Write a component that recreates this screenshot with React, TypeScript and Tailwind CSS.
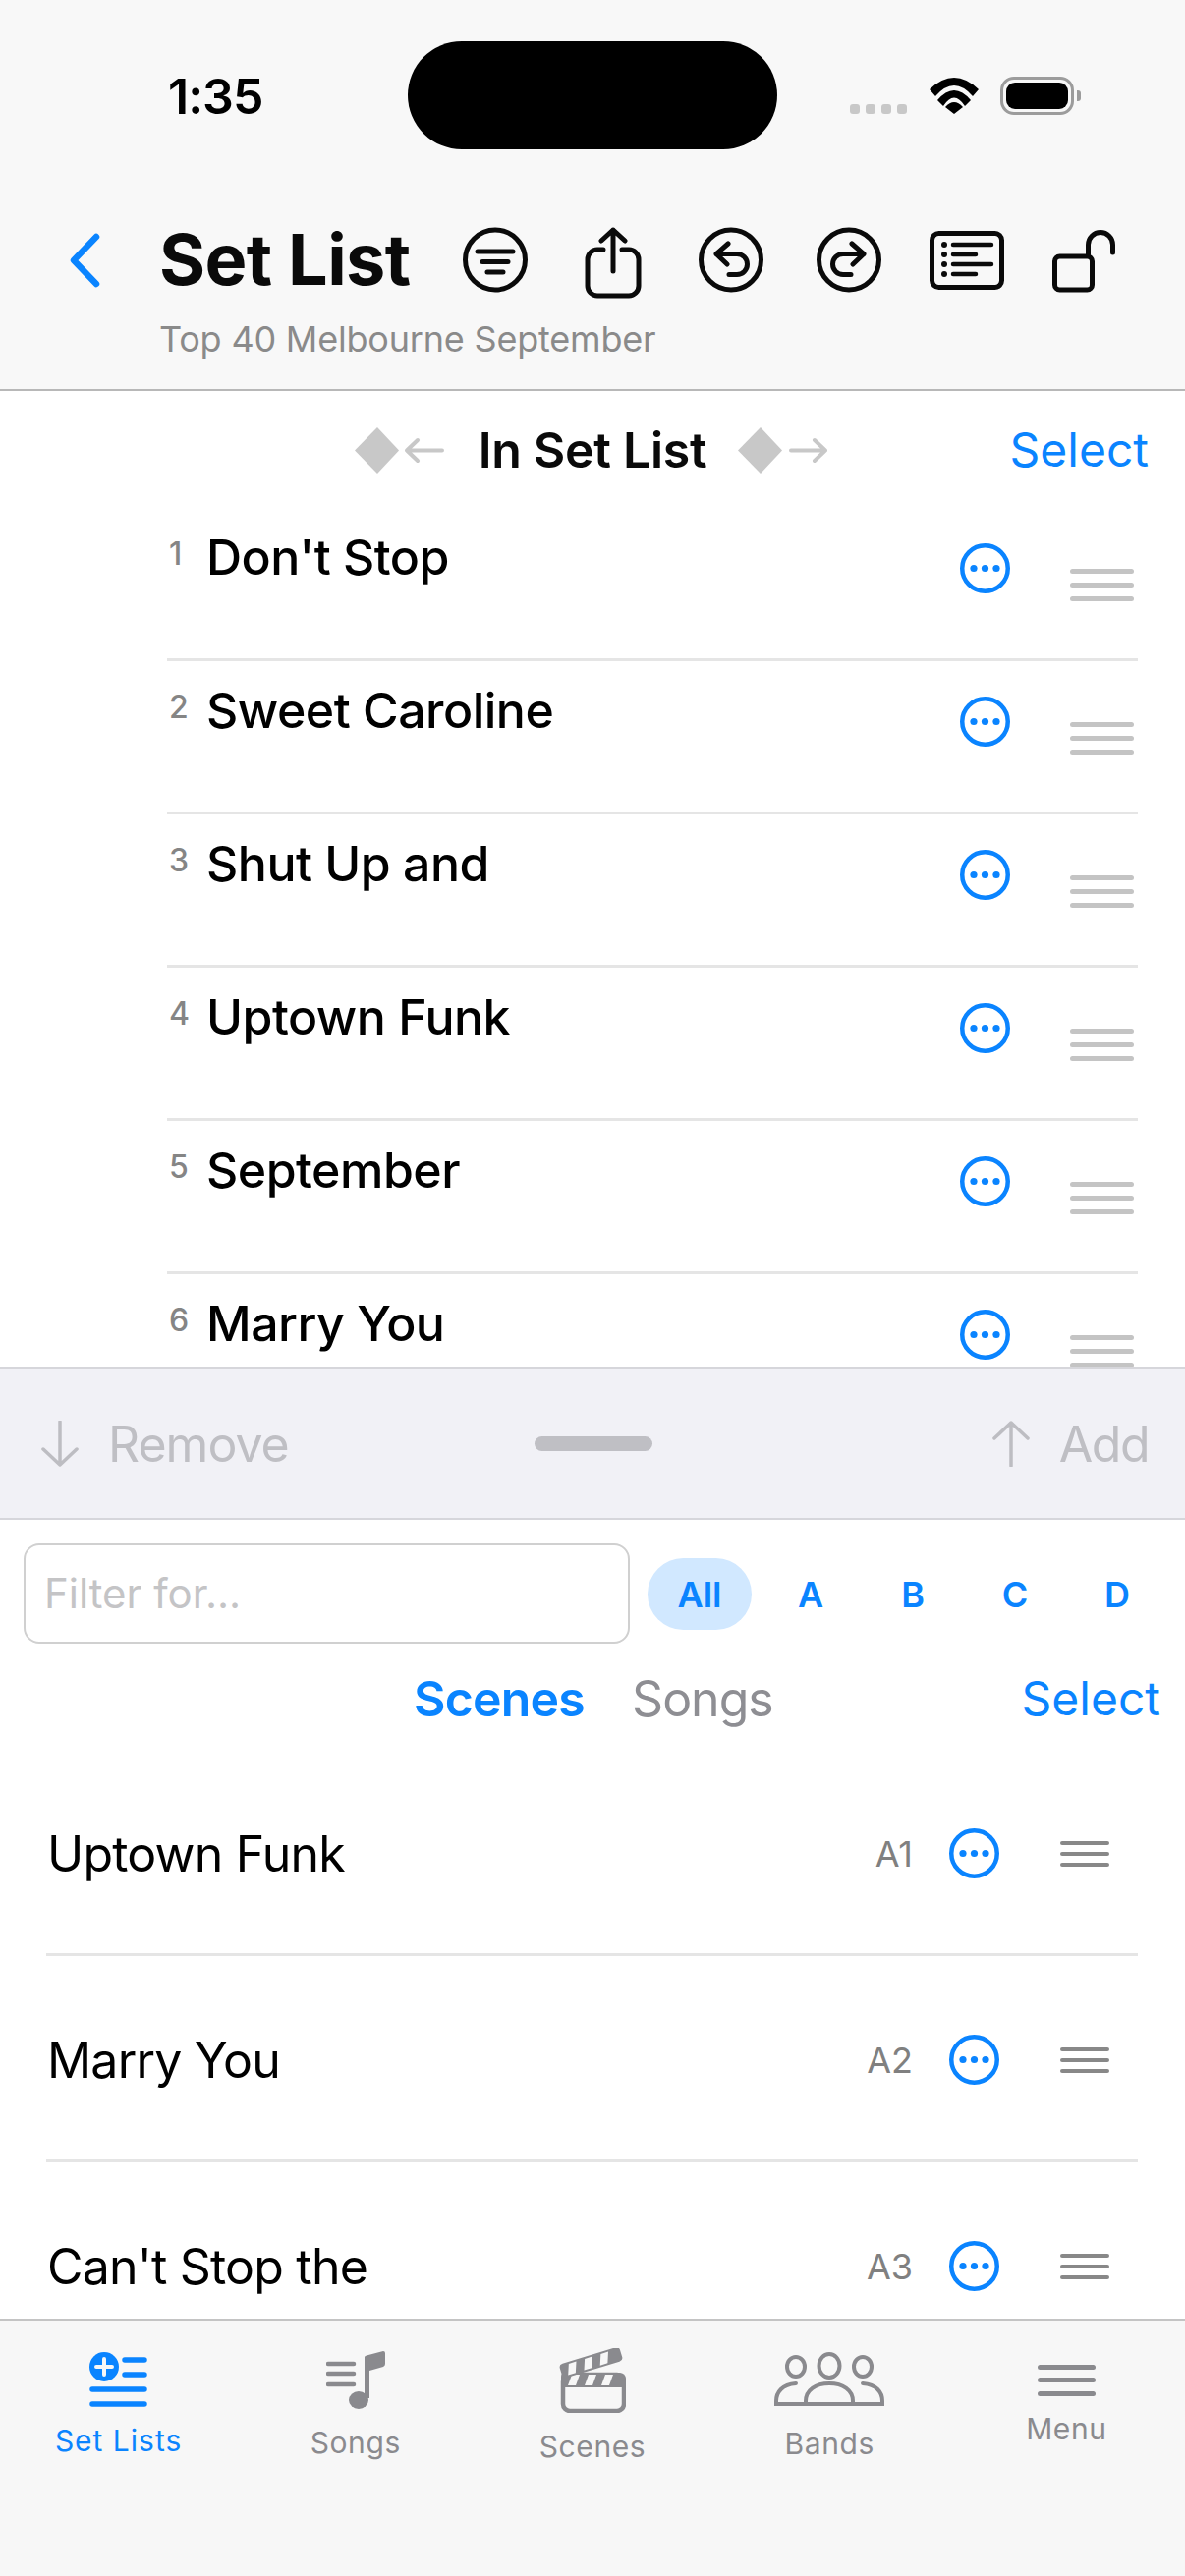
const blue = "#0a84ff";
const tabGray = "#8a8a8e";

function MoreCircle() {
    return (
        <svg width="51" height="51" viewBox="0 0 51 51" className="shrink-0">
            <circle cx="25.5" cy="25.5" r="23.25" fill="none" stroke={blue} strokeWidth="4.5" />
            <circle cx="14" cy="25.5" r="3.6" fill={blue} />
            <circle cx="25.5" cy="25.5" r="3.6" fill={blue} />
            <circle cx="37" cy="25.5" r="3.6" fill={blue} />
        </svg>
    );
}

function Handle(props: { width: number; gap: number; color: string; thick: number }) {
    const { width, gap, color, thick } = props;
    const h = gap * 2 + thick;
    return (
        <svg width={width} height={h} viewBox={`0 0 ${width} ${h}`} className="shrink-0">
            {[0, 1, 2].map((i) => (
                <rect key={i} x="0" y={i * gap} width={width} height={thick} rx={thick / 2} fill={color} />
            ))}
        </svg>
    );
}

function Chevron() {
    return (
        <svg width="33" height="56" viewBox="0 0 33 56" className="shrink-0">
            <path d="M28 4 L5 28 L28 52" fill="none" stroke={blue} strokeWidth="6.5" strokeLinecap="round" strokeLinejoin="round" />
        </svg>
    );
}

function FilterIcon() {
    return (
        <svg width="66" height="67" viewBox="0 0 66 67" className="shrink-0">
            <circle cx="33" cy="33.5" r="30.5" fill="none" stroke="#0a0a0a" strokeWidth="5" />
            <path d="M15 25H51M20 35.5H46M25 46H41" stroke="#0a0a0a" strokeWidth="5" strokeLinecap="round" />
        </svg>
    );
}

function ShareIcon() {
    return (
        <svg width="58" height="73" viewBox="0 0 58 73" className="shrink-0">
            <path d="M19 23H13a10 10 0 0 0-10 10V60a10 10 0 0 0 10 10H45a10 10 0 0 0 10-10V33a10 10 0 0 0-10-10H38" fill="none" stroke="#0a0a0a" strokeWidth="5" strokeLinecap="round" />
            <path d="M29 45V3M17 14L29 3L41 14" fill="none" stroke="#0a0a0a" strokeWidth="5" strokeLinecap="round" strokeLinejoin="round" />
        </svg>
    );
}

function UndoIcon() {
    return (
        <svg width="66" height="67" viewBox="0 0 66 67" className="shrink-0">
            <circle cx="33" cy="33.5" r="30.5" fill="none" stroke="#0a0a0a" strokeWidth="5" />
            <path d="M30 17L18 27.5L29 38M18 27.5H39a10.5 10.5 0 0 1 0 21H31" fill="none" stroke="#0a0a0a" strokeWidth="5" strokeLinecap="round" strokeLinejoin="round" />
        </svg>
    );
}

function RedoIcon() {
    return (
        <svg width="66" height="67" viewBox="0 0 66 67" className="shrink-0">
            <circle cx="33" cy="33.5" r="30.5" fill="none" stroke="#0a0a0a" strokeWidth="5" />
            <path d="M36 17L48 27.5L37 38M48 27.5H27a10.5 10.5 0 0 0 0 21H35" fill="none" stroke="#0a0a0a" strokeWidth="5" strokeLinecap="round" strokeLinejoin="round" />
        </svg>
    );
}

function ListBoxIcon() {
    return (
        <svg width="76" height="60" viewBox="0 0 76 60" className="shrink-0">
            <rect x="2.5" y="2.5" width="71" height="55" rx="7" fill="none" stroke="#0a0a0a" strokeWidth="5" />
            <path d="M24 14H63M24 24H47M24 34H63M24 44H47" stroke="#0a0a0a" strokeWidth="4.5" strokeLinecap="round" />
            <circle cx="15" cy="14" r="3" fill="#0a0a0a" />
            <circle cx="15" cy="24" r="3" fill="#0a0a0a" />
            <circle cx="15" cy="34" r="3" fill="#0a0a0a" />
            <circle cx="15" cy="44" r="3" fill="#0a0a0a" />
        </svg>
    );
}

function LockIcon() {
    return (
        <svg width="67" height="65" viewBox="0 0 67 65" className="shrink-0">
            <rect x="3.5" y="28" width="38" height="34" rx="5" fill="none" stroke="#0a0a0a" strokeWidth="5" />
            <path d="M37.5 26V16a12.5 12.5 0 0 1 25 0V24" fill="none" stroke="#0a0a0a" strokeWidth="5" strokeLinecap="round" />
        </svg>
    );
}

function Wifi() {
    return (
        <svg width="50" height="37" viewBox="0 0 50 37" className="shrink-0">
            <path d="M0 12 Q25 -12 50 12 L44 19 Q25 -3 6 19 Z" fill="#000" />
            <path d="M8 23 Q25 3 42 23 L36 29 Q25 12 14 29 Z" fill="#000" />
            <path d="M16 30 Q25 20 34 30 L25 37 Z" fill="#000" />
        </svg>
    );
}

function DiamondArrow(props: { dir: "left" | "right" }) {
    const c = "#c8c8c8";
    return (
        <svg width="91" height="47" viewBox="0 0 91 47" className="shrink-0">
            <path d="M23 0L45 23.5L23 47L0 23.5Z" fill={c} />
            {props.dir === "left" ? (
                <path d="M89 23.5H53M64 13L53 23.5L64 34" fill="none" stroke={c} strokeWidth="4" strokeLinecap="round" strokeLinejoin="round" />
            ) : (
                <path d="M54 23.5H89M78 13L89 23.5L78 34" fill="none" stroke={c} strokeWidth="4" strokeLinecap="round" strokeLinejoin="round" />
            )}
        </svg>
    );
}

function VArrow(props: { up?: boolean }) {
    return (
        <svg width="38" height="47" viewBox="0 0 38 47" className="shrink-0">
            {props.up ? (
                <path d="M19 46V2M2 18L19 2L36 18" fill="none" stroke="#bdbdc2" strokeWidth="3.5" strokeLinecap="round" strokeLinejoin="round" />
            ) : (
                <path d="M19 1V45M2 29L19 45L36 29" fill="none" stroke="#bdbdc2" strokeWidth="3.5" strokeLinecap="round" strokeLinejoin="round" />
            )}
        </svg>
    );
}

function SetListsIcon() {
    return (
        <svg width="59" height="56" viewBox="0 0 59 56">
            <circle cx="15" cy="15" r="15" fill={blue} />
            <path d="M15 7V23M7 15H23" stroke="#f7f7f7" strokeWidth="4" strokeLinecap="round" />
            <path d="M36 8H56M36 23H56M3 38H56M3 53H56" stroke={blue} strokeWidth="5.5" strokeLinecap="round" />
        </svg>
    );
}

function SongsIcon() {
    return (
        <svg width="60" height="59" viewBox="0 0 60 59">
            <path d="M2 13H28M2 23H28M2 34H28" stroke={tabGray} strokeWidth="4.5" strokeLinecap="round" />
            <path d="M39 6Q39 5 41 4.500L58 0Q60 0 60 2V13Q60 15 58 16L44 20V48H39Z" fill={tabGray} />
            <ellipse cx="33" cy="50" rx="10" ry="9" fill={tabGray} />
        </svg>
    );
}

function ScenesIcon() {
    return (
        <svg width="69" height="66" viewBox="0 0 69 66">
            <rect x="5" y="27" width="62" height="37" rx="7" fill="none" stroke={tabGray} strokeWidth="4.5" />
            <path d="M3 32V29Q3 25 7 25H62Q69 25 69 32V40H5Z" fill={tabGray} />
            <path d="M14 27H22L18 38H10ZM31 27H39L35 38H27ZM48 27H56L52 38H44Z" fill="#f7f7f7" />
            <g transform="rotate(-17 34 13)">
                <rect x="1" y="7" width="64" height="15" rx="4" fill={tabGray} />
                <path d="M11 9H19L15 20H7ZM28 9H36L32 20H24ZM45 9H53L49 20H41Z" fill="#f7f7f7" />
            </g>
        </svg>
    );
}

function BandsIcon() {
    return (
        <svg width="112" height="55" viewBox="0 0 112 55" fill="none" stroke={tabGray} strokeWidth="4">
            <ellipse cx="22" cy="15" rx="9" ry="10" />
            <ellipse cx="56" cy="14" rx="10.500" ry="12" />
            <ellipse cx="90" cy="15" rx="9" ry="10" />
            <path d="M31 53H2V50C2 41 8 33 22 32" strokeLinecap="round" />
            <path d="M81 53H110V50C110 41 104 33 90 32" strokeLinecap="round" />
            <path d="M32 53V50C32 39 42 32 56 32C70 32 80 39 80 50V53Z" />
        </svg>
    );
}

function MenuIcon() {
    return (
        <svg width="59" height="32" viewBox="0 0 59 32">
            <rect y="0" width="59" height="5" rx="2.500" fill={tabGray} />
            <rect y="13" width="59" height="5" rx="2.500" fill={tabGray} />
            <rect y="27" width="59" height="5" rx="2.500" fill={tabGray} />
        </svg>
    );
}

const setRows = ["Don't Stop", "Sweet Caroline", "Shut Up and", "Uptown Funk", "September", "Marry You"];
const sceneRows = [
    { name: "Uptown Funk", tag: "A1" },
    { name: "Marry You", tag: "A2" },
    { name: "Can't Stop the", tag: "A3" },
];

export default function App() {
    return (
        <div className="w-[1206px] h-[2622px] flex flex-col bg-white overflow-hidden [font-family:Inter,sans-serif]">
            {/* header */}
            <div className="h-[398px] shrink-0 bg-[#f8f8f8] border-b-2 border-[#b8b8b8]">
                <div className="h-[231px] flex items-start">
                    <span className="ml-[171px] mt-[70px] w-[244px] text-[50px] leading-[56px] font-semibold text-black tracking-[-1px]">1:35</span>
                    <div className="mt-[42px] w-[376px] h-[110px] rounded-[55px] bg-black" />
                    <div className="ml-[74px] mt-[106px] flex gap-[6px]">
                        <div className="w-[10px] h-[10px] rounded-[3px] bg-[#c8c8c8]" />
                        <div className="w-[10px] h-[10px] rounded-[3px] bg-[#c8c8c8]" />
                        <div className="w-[10px] h-[10px] rounded-[3px] bg-[#c8c8c8]" />
                        <div className="w-[10px] h-[10px] rounded-[3px] bg-[#c8c8c8]" />
                    </div>
                    <div className="ml-[23px] mt-[79px]">
                        <Wifi />
                    </div>
                    <div className="ml-[22px] mt-[78px] w-[75px] h-[39px] rounded-[14px] border-[3px] border-[#9c9c9c] p-[3px]">
                        <div className="w-full h-full rounded-[9px] bg-black" />
                    </div>
                    <div className="ml-[3px] mt-[92px] w-[4px] h-[11px] rounded-r-[3px] bg-[#9c9c9c]" />
                </div>
                <div className="h-[73px] flex items-start">
                    <div className="ml-[70px] mt-[6px]">
                        <Chevron />
                    </div>
                    <span className="ml-[59px] mt-[-3px] w-[309px] text-[72px] leading-[72px] font-bold text-[#0a0a0a] tracking-[-0.6px] whitespace-nowrap">Set List</span>
                    <FilterIcon />
                    <div className="ml-[58px]"><ShareIcon /></div>
                    <div className="ml-[58px]"><UndoIcon /></div>
                    <div className="ml-[54px]"><RedoIcon /></div>
                    <div className="ml-[49px] mt-[4px]"><ListBoxIcon /></div>
                    <div className="ml-[48px] mt-[2px]"><LockIcon /></div>
                </div>
                <div className="pl-[162px] mt-[19px] text-[36px] leading-[44px] text-[#8a8a8a] tracking-[-0.2px] whitespace-nowrap">Top 40 Melbourne September</div>
            </div>

            {/* in set list */}
            <div className="h-[120px] shrink-0 flex items-center justify-center relative mb-[-1px]">
                <DiamondArrow dir="left" />
                <span className="ml-[35px] mr-[32px] text-[50px] leading-[60px] font-semibold text-[#0a0a0a] tracking-[-0.3px] whitespace-nowrap">In Set List</span>
                <div className="mr-[3px]"><DiamondArrow dir="right" /></div>
                <span className="absolute right-[37px] top-[30px] text-[48px] leading-[60px] text-[#0a84ff]">Select</span>
            </div>
            <div className="h-[874px] shrink-0 overflow-hidden">
                {setRows.map((title, i) => (
                    <div key={title} className="ml-[170px] w-[988px] h-[156px] pr-[4px] flex items-start border-b-[3px] border-[#e5e5e5]">
                        <span className="w-[40px] mt-[27px] pl-[2px] text-[32px] leading-[40px] font-medium text-[#858585]">{i + 1}</span>
                        <span className="mt-[20px] text-[50px] leading-[60px] font-medium text-black tracking-[-0.5px] whitespace-nowrap">{title}</span>
                        <div className="ml-auto mt-[36px]"><MoreCircle /></div>
                        <div className="ml-[61px] mt-[62px]"><Handle width={65} gap={14} color="#c4c4c4" thick={5} /></div>
                    </div>
                ))}
            </div>

            {/* remove / add toolbar */}
            <div className="h-[156px] shrink-0 bg-[#f1f1f6] border-y-2 border-[#d6d6db] flex items-center pl-[42px] pr-[37px]">
                <div className="flex-1 flex items-center">
                    <VArrow />
                    <span className="ml-[30px] mt-[2px] text-[50px] leading-[60px] text-[#bfbfc4] tracking-[-1px]">Remove</span>
                </div>
                <div className="w-[120px] h-[15px] rounded-[8px] bg-[#bfbfc4] translate-x-[-2px]" />
                <div className="flex-1 flex items-center justify-end">
                    <VArrow up />
                    <span className="ml-[30px] mt-[2px] text-[50px] leading-[60px] text-[#bfbfc4] tracking-[-1.5px]">Add</span>
                </div>
            </div>

            {/* filter */}
            <div className="h-[153px] shrink-0 flex items-start pl-[24px] pt-[24px]">
                <div className="w-[617px] h-[102px] rounded-[16px] border-2 border-[#d0d0d0] flex items-center pl-[19px] pb-[2px] text-[42px] text-[#c4c4c6]">Filter for...</div>
                <div className="ml-[18px] mt-[15px] w-[106px] h-[73px] rounded-[37px] bg-[#d1e8ff] flex items-center justify-center text-[36px] font-semibold text-[#0a84ff]">All</div>
                <div className="ml-[8px] mt-[15px] h-[73px] flex items-center text-[36px] font-semibold text-[#0a84ff]">
                    <span className="w-[104px] text-center">A</span>
                    <span className="w-[104px] text-center">B</span>
                    <span className="w-[104px] text-center">C</span>
                    <span className="w-[104px] text-center">D</span>
                </div>
            </div>
            <div className="h-[81px] shrink-0 flex items-start relative">
                <span className="ml-[421px] mt-[-1px] text-[50px] leading-[60px] font-semibold text-[#0a84ff] tracking-[-0.8px]">Scenes</span>
                <span className="ml-[48px] mt-[-1px] text-[50px] leading-[60px] text-[#8e8e93] tracking-[-1px]">Songs</span>
                <span className="absolute right-[25px] top-[-1px] text-[48px] leading-[60px] text-[#0a84ff]">Select</span>
            </div>

            {/* scenes */}
            <div className="h-[579px] shrink-0 overflow-hidden">
                {sceneRows.map((row) => (
                    <div key={row.name} className="ml-[47px] w-[1111px] h-[210px] pt-[4px] pl-[1px] pr-[29px] flex items-center border-b-[3px] border-[#e5e5e5]">
                        <span className="text-[50px] leading-[60px] text-black tracking-[-0.8px] whitespace-nowrap">{row.name}</span>
                        <span className="ml-auto text-[36px] leading-[44px] text-[#808080]">{row.tag}</span>
                        <div className="ml-[37px]"><MoreCircle /></div>
                        <div className="ml-[62px]"><Handle width={50} gap={11} color="#888888" thick={4} /></div>
                    </div>
                ))}
            </div>

            {/* tab bar */}
            <div className="flex-1 bg-[#f7f7f7] border-t-2 border-[#c4c4c4] grid grid-cols-5 text-[30px] leading-[36px] text-[#8a8a8e] tracking-[0.6px]">
                <div className="flex flex-col items-center pt-[32px]">
                    <SetListsIcon />
                    <span className="mt-[16px] text-[#0a84ff] tracking-[1px]">Set Lists</span>
                </div>
                <div className="flex flex-col items-center pt-[31px]">
                    <SongsIcon />
                    <span className="mt-[16px]">Songs</span>
                </div>
                <div className="flex flex-col items-center pt-[28px]">
                    <ScenesIcon />
                    <span className="mt-[16px]">Scenes</span>
                </div>
                <div className="flex flex-col items-center pt-[32px]">
                    <BandsIcon />
                    <span className="mt-[20px]">Bands</span>
                </div>
                <div className="flex flex-col items-center pt-[45px]">
                    <MenuIcon />
                    <span className="mt-[15px]">Menu</span>
                </div>
            </div>
        </div>
    );
}
